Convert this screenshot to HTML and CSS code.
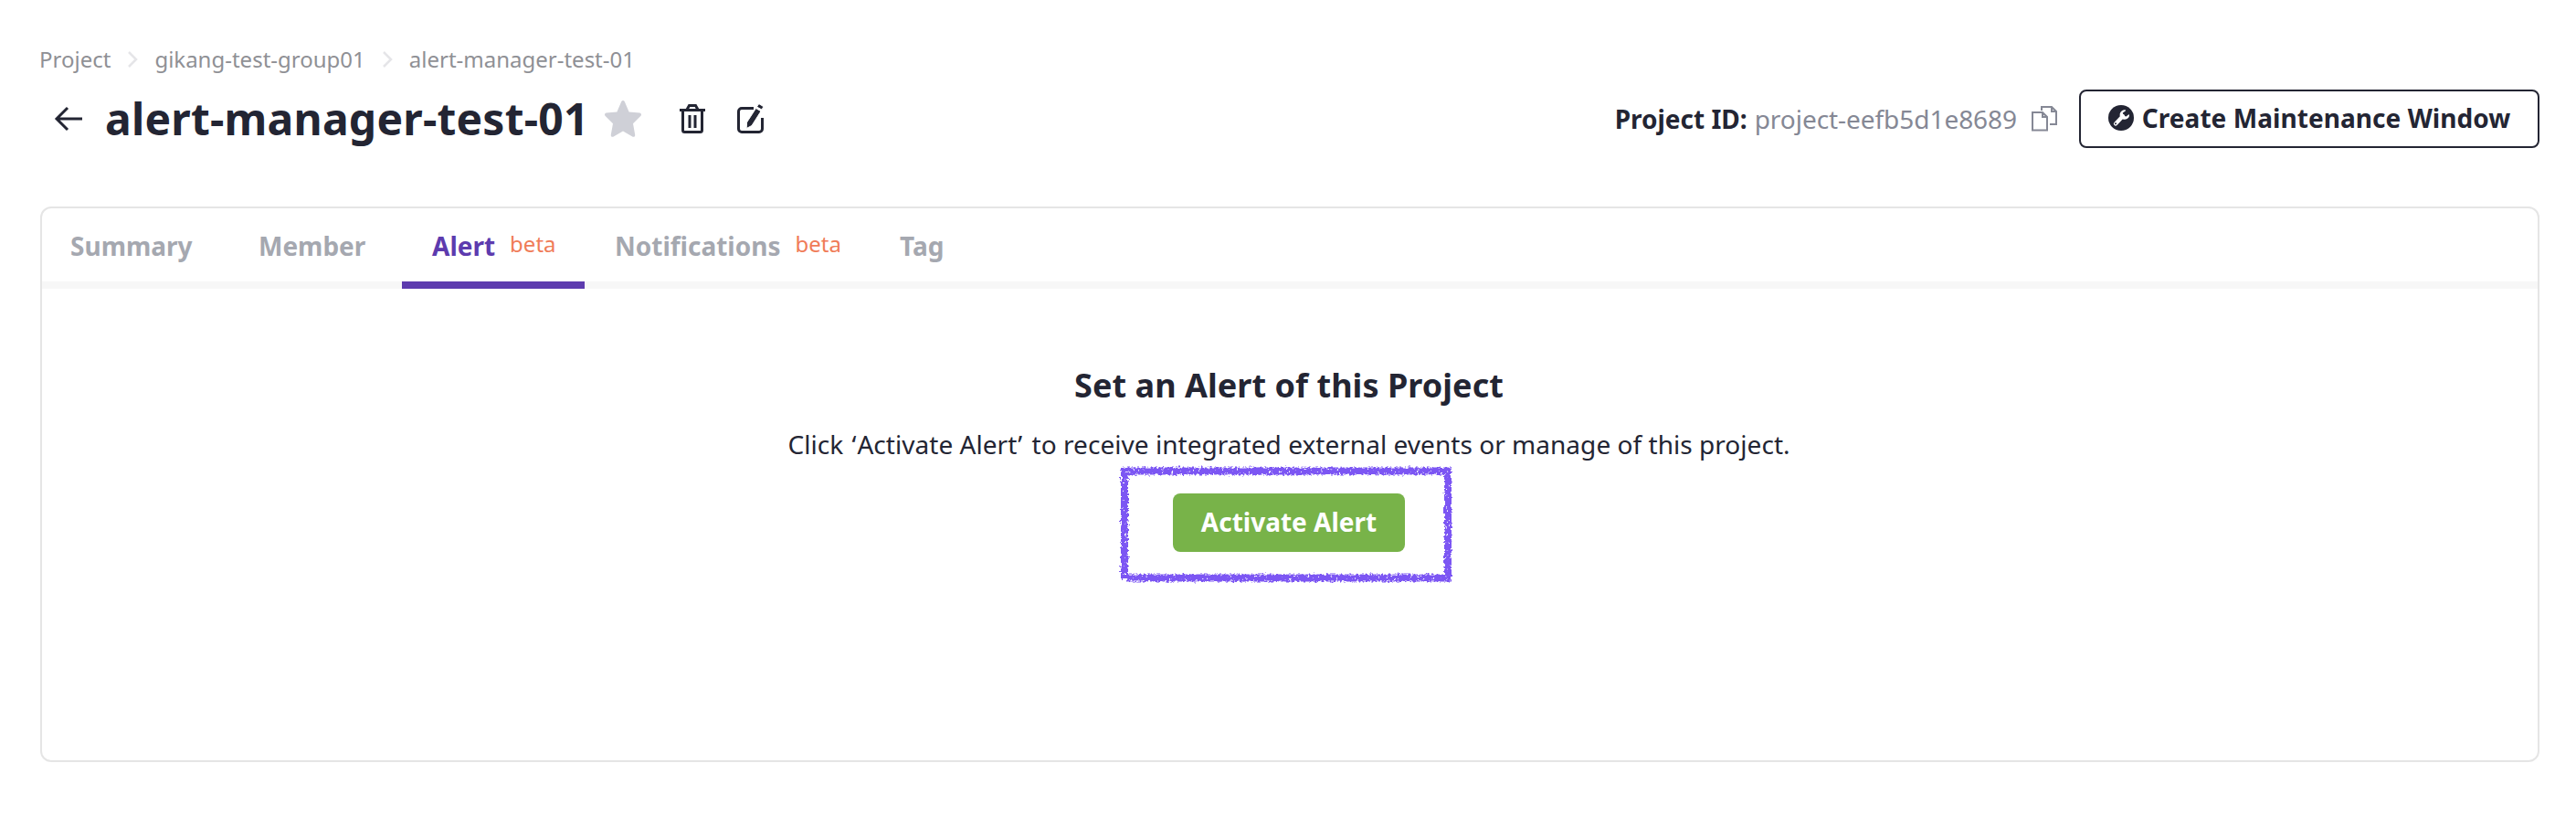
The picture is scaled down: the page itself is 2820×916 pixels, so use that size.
FILE: index.html
```html
<!DOCTYPE html>
<html lang="en">
<head>
<meta charset="utf-8">
<title>alert-manager-test-01</title>
<link rel="stylesheet" href="styles.css">
</head>
<body>
<main class="page">
  <nav class="breadcrumb">
    <span>Project</span>
    <svg class="crumb-sep" viewBox="0 0 12 20"><path d="M2 2l8 8-8 8"/></svg>
    <span>gikang-test-group01</span>
    <svg class="crumb-sep" viewBox="0 0 12 20"><path d="M2 2l8 8-8 8"/></svg>
    <span>alert-manager-test-01</span>
  </nav>

  <header class="header">
    <div class="title-group">
      <svg class="icon-back" viewBox="0 0 32 28"><path d="M31 14H3M15 2L3 14l12 12"/></svg>
      <h1 class="title">alert-manager-test-01</h1>
      <svg class="icon-star" viewBox="0 0 40 40"><path d="M18.2 1.2c.8-1.6 2.8-1.6 3.6 0l4.8 11.2 11.6 1.2c1.8.2 2.4 2.200 1.100 3.400L31 25.200l2.200 12.300c.3 1.800-1.400 2.900-2.900 2.100L20 33.500 9.700 39.600c-1.500.8-3.200-.3-2.900-2.100L9 25.200.7 17C-.6 15.800 0 13.800 1.800 13.600l11.600-1.200z"/></svg>
      <svg class="icon-trash" viewBox="0 0 28 32"><path d="M0 6.500h28M3.500 7v21.500a2 2 0 0 0 2 2h17a2 2 0 0 0 2-2V7M8 6l2.500-4.500h7L20 6" fill="none" stroke-width="3"/><path d="M11 12v14M17 12v14" stroke-width="3"/></svg>
      <svg class="icon-edit" viewBox="0 0 30 34"><path d="M18 5.500H5a3.500 3.500 0 0 0-3.500 3.500v19A3.500 3.500 0 0 0 5 31.500h19a3.500 3.500 0 0 0 3.500-3.500V16" fill="none" stroke-width="3"/><path class="solid" d="M20.500 5.500l5.500 3.200-10 15.800-5.800 3 .3-6.500z"/><path class="solid" d="M21.500 4l1.300-2.200c.5-.8 1.300-1 2-.6l2.900 1.700c.8.500.9 1.300.5 2L26.900 7z"/></svg>
    </div>
    <div class="actions">
      <strong class="pid-label">Project ID:</strong>
      <span class="pid-value">project-eefb5d1e8689</span>
      <svg class="icon-copy" viewBox="0 0 28 28"><path d="M11 5V1h11l5 5v14h-7M22 1v5h5M1 7h11l5 5v14.500H1zM12 7v5h5"/></svg>
      <button class="btn-outline">
        <svg class="icon-wrench" viewBox="0 0 28 28"><circle cx="14" cy="14" r="14" fill="#232533"/><path d="M8 20.500L16 12" stroke="#fff" stroke-width="4.200" stroke-linecap="round"/><path d="M18.800 5.300a5.300 5.300 0 1 0 4.200 6.600l-.3-1.900-3.200 2.500-3-1-.7-3 3.200-2.300z" fill="#fff"/><circle cx="8" cy="20.300" r="1" fill="#232533"/></svg>
        <span>Create Maintenance Window</span>
      </button>
    </div>
  </header>

  <section class="panel">
    <div class="tabs">
      <div class="tab tab-summary">Summary</div>
      <div class="tab tab-member">Member</div>
      <div class="tab tab-alert active">Alert<span class="beta">beta</span></div>
      <div class="tab tab-notifications">Notifications<span class="beta">beta</span></div>
      <div class="tab">Tag</div>
    </div>
    <div class="content">
      <h2 class="heading">Set an Alert of this Project</h2>
      <p class="desc">Click <span class="quote-open">‘</span>Activate Alert<span class="quote-close">’</span> to receive integrated external events or manage of this project.</p>
      <div class="activate">
        <button class="btn-primary">Activate Alert</button>
        <svg class="marker" viewBox="0 0 376 138">
          <defs>
            <filter id="chalk" x="0" y="0" width="376" height="138" filterUnits="userSpaceOnUse" color-interpolation-filters="sRGB">
              <feTurbulence type="fractalNoise" baseFrequency="0.4" numOctaves="2" seed="4" result="n"/>
              <feDisplacementMap in="SourceGraphic" in2="n" scale="6" xChannelSelector="R" yChannelSelector="G" result="d"/>
              <feTurbulence type="fractalNoise" baseFrequency="0.35" numOctaves="2" seed="9"/>
              <feColorMatrix values="0 0 0 0 0  0 0 0 0 0  0 0 0 0 0  9 0 0 0 -2.100" result="m"/>
              <feComposite in="d" in2="m" operator="in"/>
            </filter>
          </defs>
          <path d="M7 11.500H369M365 8V130M369 128.500H13M11 129V8" filter="url(#chalk)"/>
        </svg>
      </div>
    </div>
  </section>
</main>
</body>
</html>
```
FILE: styles.css
```css
* { box-sizing: border-box; }
body {
  margin: 0;
  background: #fff;
  color: #232533;
  font-family: "Noto Sans", sans-serif;
}
h1, h2, p { margin: 0; }
button { font-family: inherit; }
svg { display: block; flex: none; }

.page {
  height: 916px;
  padding: 48px 40px 0 44px;
}
.breadcrumb {
  display: flex;
  align-items: center;
  height: 34px;
  margin-left: -1px;
  font-size: 24px;
  line-height: 34px;
  color: #8f9095;
}
.crumb-sep {
  width: 12px;
  height: 20px;
  margin: 0 18px;
  fill: none;
  stroke: #e5e5e8;
  stroke-width: 2.5;
}
.header {
  display: flex;
  justify-content: space-between;
  align-items: center;
  height: 64px;
  margin-top: 16px;
}
.title-group, .actions {
  display: flex;
  align-items: center;
}
.icon-back {
  width: 32px;
  height: 28px;
  margin: 0 24px 0 15px;
  fill: none;
  stroke: #232533;
  stroke-width: 3;
}
.title {
  font-size: 48px;
  line-height: 64px;
  font-weight: 700;
  letter-spacing: 0.2px;
}
.icon-star {
  width: 40px;
  height: 40px;
  margin-left: 17px;
  fill: #cfd0d7;
}
.icon-trash {
  width: 28px;
  height: 32px;
  margin-left: 42px;
  stroke: #232533;
}
.icon-edit {
  width: 30px;
  height: 34px;
  margin-left: 35px;
  fill: none;
  stroke: #232533;
}
.icon-edit .solid {
  fill: #232533;
  stroke: #fff;
  stroke-width: 1;
}
.pid-label, .pid-value {
  font-size: 28px;
  line-height: 40px;
}
.pid-value {
  margin-left: 8px;
  color: #858895;
  letter-spacing: -0.05px;
}
.icon-copy {
  width: 28px;
  height: 28px;
  margin: 0 24px 0 16px;
  fill: none;
  stroke: #858895;
  stroke-width: 2;
}
.btn-outline {
  display: flex;
  align-items: center;
  justify-content: center;
  gap: 9px;
  width: 504px;
  height: 64px;
  padding: 0 0 2px;
  border: 2px solid #232533;
  border-radius: 8px;
  background: #fff;
  color: #232533;
  font-size: 28px;
  font-weight: 700;
  letter-spacing: 0.06px;
  white-space: nowrap;
}
.icon-wrench { width: 28px; height: 28px; }

.panel {
  width: 2736px;
  height: 608px;
  margin-top: 64px;
  border: 2px solid #e5e5e5;
  border-radius: 12px;
}
.tabs {
  display: flex;
  height: 88px;
  border-bottom: 8px solid #f7f7f7;
}
.tab {
  display: flex;
  align-items: center;
  height: 88px;
  padding: 2px 31px 0 33px;
  border-bottom: 8px solid transparent;
  color: #a5a8b0;
  font-size: 28px;
  font-weight: 700;
}
.tab-summary { width: 206px; padding-left: 31px; }
.tab-member { width: 188px; padding-left: 31px; }
.tab-alert { width: 200px; }
.tab-notifications { width: 312px; }
.tab.active {
  border-color: #5d3bae;
  color: #5d3bae;
}
.beta {
  margin: -5px 0 0 16px;
  color: #f07c58;
  font-size: 24px;
  font-weight: 400;
}
.content {
  display: flex;
  flex-direction: column;
  align-items: center;
  padding: 80px 2px 0 0;
}
.heading {
  font-size: 36px;
  line-height: 52px;
  font-weight: 700;
  letter-spacing: 0.05px;
}
.desc {
  margin-top: 18px;
  font-size: 28px;
  line-height: 40px;
  letter-spacing: 0.04px;
}
.quote-open { margin: 0 1px 0 2px; }
.quote-close { margin: 0 3px 0 1px; }
.activate {
  position: relative;
  margin-top: 34px;
}
.btn-primary {
  display: block;
  width: 254px;
  height: 64px;
  padding: 0 0 2px;
  border: 0;
  border-radius: 8px;
  background: #78b349;
  color: #fff;
  font-size: 28px;
  font-weight: 700;
}
.marker {
  position: absolute;
  top: -36px;
  left: -64px;
  width: 376px;
  height: 138px;
  fill: none;
  stroke: #7c56f3;
  stroke-width: 8;
  pointer-events: none;
}
```
